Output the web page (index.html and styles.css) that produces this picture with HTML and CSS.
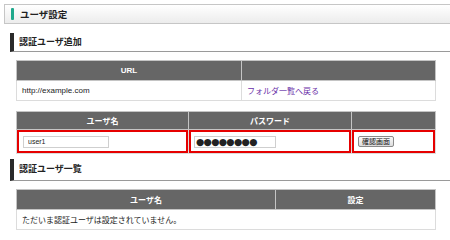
FILE: index.html
```html
<!DOCTYPE html>
<html lang="ja">
<head>
<meta charset="utf-8">
<title>ユーザ設定</title>
<link rel="stylesheet" href="styles.css">
</head>
<body>
<div class="page">
  <div class="titlebar"><span class="accent"></span><h1 class="title">ユーザ設定</h1></div>

  <h2 class="heading first">認証ユーザ追加</h2>
  <table class="grid t-url">
    <colgroup><col class="w225"><col></colgroup>
    <tr class="head"><th>URL</th><th></th></tr>
    <tr class="row"><td>http://example.com</td><td><a class="link" href="#">フォルダ一覧へ戻る</a></td></tr>
  </table>

  <table class="grid t-form">
    <colgroup><col class="w172"><col class="w163"><col></colgroup>
    <tr class="head short"><th>ユーザ名</th><th>パスワード</th><th></th></tr>
    <tr class="row tall">
      <td class="hl"><input class="field user" type="text" value="user1"></td>
      <td class="hl"><input class="field pass" type="text" value="●●●●●●●●"></td>
      <td class="hl"><button class="btn" type="button">確認画面</button></td>
    </tr>
  </table>

  <h2 class="heading second">認証ユーザ一覧</h2>
  <table class="grid t-list">
    <colgroup><col class="w259"><col></colgroup>
    <tr class="head"><th>ユーザ名</th><th>設定</th></tr>
    <tr class="row"><td colspan="2">ただいま認証ユーザは設定されていません。</td></tr>
  </table>
</div>
</body>
</html>
```

FILE: styles.css
```css
html, body {
  margin: 0;
  padding: 0;
  background: #fff;
  overflow: hidden;
}
body {
  font-family: "Liberation Sans", "Noto Sans CJK JP", sans-serif;
  font-size: 8px;
  color: #222;
  width: 450px;
}
.page {
  padding-top: 4px;
}
.titlebar {
  margin-left: 4px;
  margin-right: -6px;
  height: 18px;
  border: 1px solid #c6c6c6;
  background: linear-gradient(#ffffff, #ececec);
  display: flex;
  align-items: center;
  padding-left: 6px;
  gap: 6px;
}
.accent {
  width: 3px;
  height: 12px;
  background: #1fa88c;
  border-radius: 1px;
}
.title {
  margin: 0;
  font-size: 9.5px;
  font-weight: bold;
  color: #222;
}
.heading {
  margin: 0 0 0 10px;
  border-left: 4px solid #2a2a2a;
  border-bottom: 1px solid #9a9a9a;
  padding-left: 5px;
  font-size: 9px;
  font-weight: bold;
  color: #222;
}
.heading.first {
  margin-top: 9px;
  height: 18px;
  line-height: 18px;
}
.heading.second {
  margin-top: 5px;
  height: 21px;
  line-height: 21px;
}
.grid {
  margin-left: 16px;
  width: 420px;
  border-collapse: collapse;
  table-layout: fixed;
}
.t-url { margin-top: 8px; }
.t-form { margin-top: 10px; }
.t-list { margin-top: 8px; }
.w225 { width: 225px; }
.w172 { width: 172px; }
.w163 { width: 163px; }
.w259 { width: 259px; }
.grid th {
  background: #666;
  color: #fff;
  font-weight: bold;
  font-size: 8px;
  border: 1px solid #c4c4c4;
  height: 19px;
  padding: 0;
  text-align: center;
}
.head.short th {
  height: 17px;
}
.grid td {
  border: 1px solid #dcdcdc;
  height: 19px;
  padding: 0 0 0 5px;
  background: #fff;
  font-size: 8px;
  color: #222;
}
.row.tall td {
  height: 23px;
}
.grid td.hl {
  box-shadow: inset 0 0 0 2px #e60000;
  padding-left: 6px;
}
.link {
  color: #6a2fa8;
  text-decoration: none;
}
.field {
  display: block;
  box-sizing: border-box;
  height: 12px;
  border: 1px solid #cfcfcf;
  padding: 0 0 0 4px;
  margin: 0;
  background: #fff;
  font-family: "Liberation Sans", sans-serif;
  color: #222;
  outline: none;
}
.field.user {
  width: 86px;
  font-size: 7px;
}
.field.pass {
  width: 82px;
  margin-left: -1px;
  font-size: 9.5px;
  line-height: 10px;
  padding-left: 1px;
  letter-spacing: -0.7px;
  font-family: "DejaVu Sans", sans-serif;
}
.btn {
  display: block;
  box-sizing: border-box;
  width: 36px;
  height: 11px;
  padding: 0;
  margin: 0;
  border: 1px solid #8a8a8a;
  border-radius: 2px;
  background: linear-gradient(#fafafa, #dcdcdc);
  font-family: "Noto Sans CJK JP", sans-serif;
  font-size: 7px;
  line-height: 9px;
  color: #111;
}
```
